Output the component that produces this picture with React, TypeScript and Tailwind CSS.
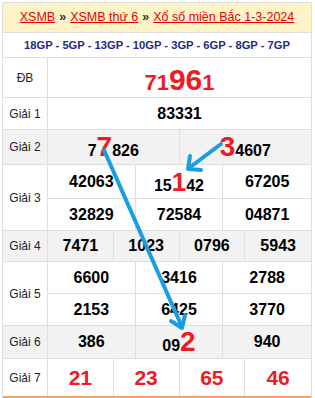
import type { ReactNode } from "react";

const red = "text-[#ed1c24]";

function Cells({ items, cols }: { items: ReactNode[]; cols: 2 | 3 | 4 }) {
  const grid =
    cols === 2 ? "grid-cols-2" : cols === 3 ? "grid-cols-3" : "grid-cols-4";
  return (
    <div className={`grid ${grid} h-full`}>
      {items.map((it, i) => (
        <div
          key={i}
          className={`flex items-center justify-center ${
            i < items.length - 1 ? "border-r border-[#dedede]" : ""
          }`}
        >
          {it}
        </div>
      ))}
    </div>
  );
}

function Row({
  label,
  h,
  gray,
  last,
  children,
}: {
  label: string;
  h: string;
  gray?: boolean;
  last?: boolean;
  children: ReactNode;
}) {
  return (
    <div
      className={`flex ${h} ${gray ? "bg-[#f2f2f2]" : "bg-white"} ${
        last ? "border-b-2 border-[#f3a55c]" : "border-b border-[#dedede]"
      }`}
    >
      <div className="w-[45px] shrink-0 border-r border-[#dedede] flex items-center justify-center text-[12px] text-[#222]">
        {label}
      </div>
      <div className="flex-1 min-w-0">{children}</div>
    </div>
  );
}

const Num = ({ children }: { children: ReactNode }) => (
  <span className="text-[16px] font-bold text-black leading-none">
    {children}
  </span>
);

const Big = ({ children }: { children: ReactNode }) => (
  <span className={`text-[28px] font-bold ${red} leading-none`}>
    {children}
  </span>
);

export default function App() {
  return (
    <div
      className="relative w-[315px] h-[398px] bg-white overflow-hidden"
      style={{ fontFamily: '"Liberation Sans", Arial, sans-serif' }}
    >
      {/* bit of the table above */}
      <div className="ml-[2px] w-[310px] h-[2px] flex">
        <div className="w-[104px] border-r border-[#dedede]" />
        <div className="w-[132px] border-r border-[#dedede]" />
      </div>

      <div className="ml-[2px] w-[310px] border-x border-t border-[#dedede]">
        {/* header */}
        <div className="h-[30px] bg-[#fff4c8] border-b border-[#dedede] flex items-center justify-center text-[12.5px] text-[#e60000] whitespace-nowrap">
          <span className="underline">XSMB</span>
          <span className="text-[#333] font-bold mx-[4px]">»</span>
          <span className="underline">XSMB thứ 6</span>
          <span className="text-[#333] font-bold mx-[4px]">»</span>
          <span className="underline">Xổ số miền Bắc 1-3-2024</span>
        </div>

        <div className="h-[25px] border-b border-[#dedede] flex items-center justify-center text-[11.2px] font-bold text-[#1f2a85] whitespace-nowrap">
          18GP - 5GP - 13GP - 10GP - 3GP - 6GP - 8GP - 7GP
        </div>

        <Row label="ĐB" h="h-[40px]">
          <div className="h-full flex items-baseline justify-center pt-[7px] font-bold text-[#ed1c24]">
            <span className="text-[22px] leading-none">71</span>
            <span className="text-[30px] leading-none">96</span>
            <span className="text-[22px] leading-none">1</span>
          </div>
        </Row>

        <Row label="Giải 1" h="h-[32px]">
          <div className="h-full flex items-center justify-center">
            <Num>83331</Num>
          </div>
        </Row>

        <Row label="Giải 2" h="h-[35px]" gray>
          <Cells
            cols={2}
            items={[
              <span className="flex items-baseline">
                <Num>7</Num>
                <Big>7</Big>
                <Num>826</Num>
              </span>,
              <span className="flex items-baseline">
                <Big>3</Big>
                <Num>4607</Num>
              </span>,
            ]}
          />
        </Row>

        <Row label="Giải 3" h="h-[66px]">
          <div className="h-full flex flex-col">
            <div className="h-[34px] border-b border-[#dedede]">
              <Cells
                cols={3}
                items={[
                  <Num>42063</Num>,
                  <span className="flex items-baseline">
                    <Num>15</Num>
                    <span className={`text-[26px] font-bold ${red} leading-none`}>1</span>
                    <Num>42</Num>
                  </span>,
                  <Num>67205</Num>,
                ]}
              />
            </div>
            <div className="flex-1">
              <Cells
                cols={3}
                items={[<Num>32829</Num>, <Num>72584</Num>, <Num>04871</Num>]}
              />
            </div>
          </div>
        </Row>

        <Row label="Giải 4" h="h-[31px]" gray>
          <Cells
            cols={4}
            items={[<Num>7471</Num>, <Num>1023</Num>, <Num>0796</Num>, <Num>5943</Num>]}
          />
        </Row>

        <Row label="Giải 5" h="h-[64px]">
          <div className="h-full flex flex-col">
            <div className="h-[32px] border-b border-[#dedede]">
              <Cells
                cols={3}
                items={[<Num>6600</Num>, <Num>3416</Num>, <Num>2788</Num>]}
              />
            </div>
            <div className="flex-1">
              <Cells
                cols={3}
                items={[<Num>2153</Num>, <Num>6425</Num>, <Num>3770</Num>]}
              />
            </div>
          </div>
        </Row>

        <Row label="Giải 6" h="h-[33px]" gray>
          <Cells
            cols={3}
            items={[
              <Num>386</Num>,
              <span className="flex items-baseline">
                <Num>09</Num>
                <Big>2</Big>
              </span>,
              <Num>940</Num>,
            ]}
          />
        </Row>

        <Row label="Giải 7" h="h-[39px]" last>
          <Cells
            cols={4}
            items={["21", "23", "65", "46"].map((n) => (
              <span className={`text-[21px] font-bold ${red} leading-none`}>{n}</span>
            ))}
          />
        </Row>
      </div>

      {/* arrows */}
      <svg
        className="absolute left-0 top-0 pointer-events-none"
        width="315"
        height="398"
        viewBox="0 0 315 398"
      >
        <g
          stroke="#1b9de2"
          strokeWidth="4"
          strokeLinecap="round"
          strokeLinejoin="round"
          fill="none"
        >
          <path d="M104 150 L182 327" />
          <path d="M171 321 L182 328 L185 315" />
          <path d="M221 144 L189 168" />
          <path d="M190 156 L188 169 L201 170" />
        </g>
      </svg>
    </div>
  );
}
